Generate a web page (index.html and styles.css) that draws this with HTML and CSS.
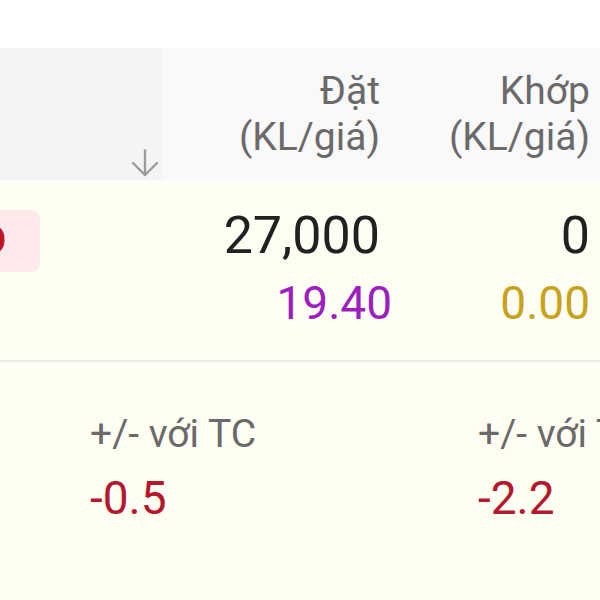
FILE: index.html
```html
<!DOCTYPE html>
<html lang="vi">
<head>
<meta charset="utf-8">
<link rel="stylesheet" href="styles.css">
</head>
<body>
<div class="page">
  <div class="topbar"></div>
  <div class="header">
    <div class="hcell hcell-fixed">
      <svg class="sort-icon" width="30" height="28" viewBox="0 0 30 28" fill="none" stroke="#9a9a9a" stroke-width="2.4" stroke-linecap="round" stroke-linejoin="round">
        <path d="M15 1.5v24.5"/>
        <path d="M3 14l12 12 12-12"/>
      </svg>
    </div>
    <div class="hcell"><span>Đặt</span><span>(KL/giá)</span></div>
    <div class="hcell"><span>Khớp</span><span>(KL/giá)</span></div>
    <div class="hcell hcell-next"></div>
  </div>
  <div class="row">
    <div class="cell cell-fixed"><span class="badge">HO</span></div>
    <div class="cell"><span class="qty">27,000</span><span class="price price-order">19.40</span></div>
    <div class="cell"><span class="qty">0</span><span class="price price-match">0.00</span></div>
    <div class="cell cell-next"></div>
  </div>
  <div class="details">
    <div class="detail"><span class="label">+/- với TC</span><span class="value">-0.5</span></div>
    <div class="detail"><span class="label">+/- với TC</span><span class="value">-2.2</span></div>
  </div>
</div>
</body>
</html>
```
FILE: styles.css
```css
html, body {
  margin: 0;
  padding: 0;
  background: #ffffff;
}
body {
  font-family: Roboto, "Noto Sans", "Liberation Sans", sans-serif;
  width: 600px;
  height: 600px;
  overflow: hidden;
}
.page {
  width: 600px;
  height: 600px;
  display: flex;
  flex-direction: column;
  overflow: hidden;
}
.topbar {
  height: 48px;
  background: #ffffff;
  flex: none;
}
.header {
  height: 132px;
  flex: none;
  display: grid;
  grid-template-columns: 162px 228px 210px 60px;
  background: #f9f9f9;
}
.hcell {
  display: flex;
  flex-direction: column;
  justify-content: center;
  align-items: flex-end;
  padding-right: 10px;
  color: #6a6a6a;
  font-size: 39px;
  line-height: 46px;
  white-space: nowrap;
}
.hcell-fixed {
  background: #f4f4f4;
  justify-content: flex-end;
  padding-right: 2px;
  padding-bottom: 3px;
}
.hcell-next {
  background: #fbfbfb;
}
.sort-icon {
  display: block;
}
.row {
  flex: none;
  display: grid;
  grid-template-columns: 162px 228px 210px 60px;
  background: #fffef3;
  border-bottom: 2px solid #ecebe6;
  box-sizing: border-box;
  height: 182px;
}
.cell {
  display: flex;
  flex-direction: column;
  align-items: flex-end;
  padding-top: 25px;
  padding-right: 10px;
  white-space: nowrap;
}
.cell-fixed {
  align-items: flex-start;
  padding-top: 30px;
  padding-right: 0;
  overflow: hidden;
}
.badge {
  display: block;
  margin-left: -58px;
  width: 98px;
  height: 62px;
  box-sizing: border-box;
  padding-right: 34px;
  text-align: right;
  background: #fde8ea;
  border-radius: 9px;
  color: #c3121f;
  font-weight: 700;
  font-size: 40px;
  line-height: 62px;
}
.qty {
  font-size: 52px;
  line-height: 62px;
  color: #212121;
}
.price {
  font-size: 46px;
  line-height: 56px;
  margin-top: 8px;
}
.price-order {
  color: #9c1fbf;
  margin-right: -12px;
}
.price-match {
  color: #c8a21c;
}
.details {
  flex: 1;
  background: #fffef3;
  display: grid;
  grid-template-columns: 388px 388px;
  padding-left: 90px;
  padding-top: 49px;
  align-content: start;
}
.detail {
  display: flex;
  flex-direction: column;
  white-space: nowrap;
}
.label {
  font-size: 39px;
  line-height: 46px;
  color: #6a6a6a;
}
.value {
  font-size: 46px;
  line-height: 54px;
  margin-top: 14px;
  color: #b5172c;
}
```
